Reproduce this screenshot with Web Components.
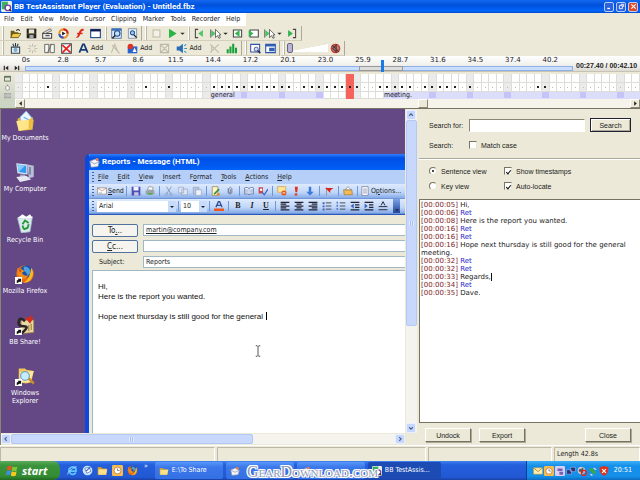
<!DOCTYPE html>
<html lang="en">
<head>
<meta charset="utf-8">
<title>BB TestAssistant Player</title>
<style>
html,body{margin:0;height:100%}
body{background:#ece9d8;font:7px/9px "DejaVu Sans Condensed","Noto Sans",sans-serif;color:#222}
</style>
</head>
<body>
<bb-player></bb-player>
<script>
const BASE = `*{box-sizing:border-box}button,input,select{font:inherit;color:inherit;margin:0;padding:0}button{border:0;background:none}a{color:inherit;text-decoration:none}`;
function define(name, css, html) {
  const t = document.createElement('template');
  customElements.define(name, class extends HTMLElement {
    connectedCallback() {
      if (this.shadowRoot) return;
      t.innerHTML = `<style>${BASE}${css}</style>${typeof html === 'function' ? html(this) : html}`;
      this.attachShadow({mode: 'open'}).append(t.content.cloneNode(true));
    }
  });
}

/* Drawings on a 16 x 16 field */
const FOLDER = '<path d="M1 3h5l2 2h6v9H1z" fill="#c99a2e"/><path d="M2 6h13l-2 8H2z" fill="#fbe08a"/>';
const align = (a) => a.map((r, i) => `<path d="M${r[0]} ${2 + i * 3}h${r[1]}" stroke="#223" stroke-width="2"/>`).join('');
const WIN = '<rect x="1" y="2" width="14" height="12" fill="#fff" stroke="#123a8c" stroke-width="1.5"/>';
const ICONS = {
  app: '<rect width="16" height="16" rx="2" fill="#e8f3e8"/><rect x="1" y="1" width="9" height="11" fill="#3fae62"/><circle cx="10" cy="10" r="4" fill="#fff" stroke="#7a3fa8" stroke-width="2"/><path d="M12 12l3 3" stroke="#333" stroke-width="2"/>',
  open: '<path d="M1 4h5l1 2h5v8H1z" fill="#6b5a10"/><path d="M4 8h12l-4 6H1z" fill="#f0c84a" stroke="#54470c"/><path d="M9 4c2-3 4-2 5 0" stroke="#222" fill="none" stroke-width="1.5"/>',
  save: '<path d="M1 1h14v14H1z" fill="#222"/><path d="M4 2h8v6H4z" fill="#e9e7d2"/><path d="M5 10h6v5H5z" fill="#aaa"/><path d="M2 8h12v1H2z" fill="#77783a"/>',
  clap: '<path d="M1 8h13v7H1z" fill="#eee" stroke="#444" stroke-width="1.5"/><path d="M1 7L12 1l2 3L5 8z" fill="#ddd" stroke="#444"/><path d="M5 11h6" stroke="#555" stroke-width="2"/>',
  wheel: '<circle cx="8" cy="8" r="6" fill="#fff" stroke="#e4912a" stroke-width="3"/><path d="M8 2a6 6 0 0 1 6 6" stroke="#c22" stroke-width="3" fill="none"/><path d="M2 9a6 6 0 0 0 6 5" stroke="#3456c8" stroke-width="3" fill="none"/><path d="M6 5l5 3-5 3z" fill="#222"/>',
  flash: '<path d="M14 1C9 1 8 4 7 7H5L4 9h2c-1 3-2 4-4 5 4 1 6-1 7-5h3l1-2h-3c1-2 1-3 4-3z" fill="#e0281e"/>',
  win: WIN + '<path d="M1 2h14v3H1z" fill="#101a4c"/>',
  zoomwin: '<path d="M1 1h14v14H1z" fill="#dfeaff" stroke="#234f93"/><path d="M1 1h14v3H1z" fill="#3971bd"/><circle cx="9" cy="8" r="4" fill="#bfe1ff" stroke="#1e4778" stroke-width="1.5"/><path d="M6 11l-4 4" stroke="#222" stroke-width="2"/>',
  zoomdoc: '<path d="M2 1h12v14H2z" fill="#e8efff" stroke="#678"/><circle cx="8" cy="7" r="3" fill="#9ac9f4" stroke="#255a92" stroke-width="1.5"/><path d="M10 10l4 4" stroke="#222" stroke-width="2"/>',
  stop: '<path d="M3 3h10v10H3z" fill="#f4f2e6" stroke="#bdb9a6" stroke-width="1.5"/>',
  play: '<path d="M3 1l11 7-11 7z" fill="#27b441"/>',
  down: '<path d="M3 6h10l-5 5z" fill="#222"/>',
  first: '<path d="M2 1v14M2 2h4M2 14h4" stroke="#444" stroke-width="1.5" fill="none"/><path d="M13 3v10L6 8z" fill="#53c86b"/>',
  last: '<path d="M14 1v14M14 2h-4M14 14h-4" stroke="#444" stroke-width="1.5" fill="none"/><path d="M3 3v10l7-5z" fill="#35b551"/>',
  pickl: '<path d="M2 3v10l6-5z" fill="#4ac164"/><path d="M8 2v12l3-3 2 4 2-1-2-4h3z" fill="#fff" stroke="#333"/><path d="M1 2v12" stroke="#333"/>',
  framel: '<path d="M2 3h12v10H2z" fill="#fff" stroke="#444" stroke-width="1.5"/><path d="M11 3v10L4 8z" fill="#35b551"/>',
  framer: '<path d="M3 3h12v10H3z" fill="#fff" stroke="#444" stroke-width="1.5"/><path d="M1 3v10l7-5z" fill="#35b551"/>',
  cam: '<path d="M2 6h12v9H2z" fill="#eee" stroke="#345" stroke-width="1.5"/><circle cx="8" cy="10" r="3" fill="#7aaed4"/><path d="M4 1l2 4M12 1l-2 4M8 0v5" stroke="#234" stroke-width="1.5"/>',
  spark: '<path d="M8 1v4M8 11v4M1 8h4M11 8h4M3 3l3 3M13 3l-3 3M3 13l3-3M13 13l-3-3" stroke="#c2beaa" stroke-width="1.5"/>',
  split: '<path d="M1 2h6v12H1zM9 2h6v12H9z" fill="#f6f6f0" stroke="#555" stroke-width="1.2"/><path d="M11 2L5 14" stroke="#555"/>',
  cut: '<path d="M1 1h14v14H1z" fill="#fff" stroke="#345" stroke-width="1.5"/><path d="M2 3l12 11M14 2L2 14" stroke="#e3251b" stroke-width="2.5"/>',
  text: '<path d="M2 14L7 2h2l5 12M4 10h8" stroke="#183a78" stroke-width="2.5" fill="none"/>',
  textoff: '<path d="M2 14L7 2l5 12M3 3l11 12" stroke="#bdb9a6" stroke-width="1.5" fill="none"/>',
  shape: '<path d="M1 5h14v10H1z" fill="#2a63cf"/><circle cx="5" cy="5" r="4" fill="#e03123"/><path d="M8 13l3-6 3 6z" fill="#fff"/>',
  shapeoff: '<path d="M2 2h12v12H2zM2 2l12 12M14 2L2 14" stroke="#bdb9a6" fill="none" stroke-width="1.5"/>',
  sound: '<path d="M1 5h4l5-4v14l-5-4H1z" fill="#2b6cb8"/><path d="M12 4l3-2M12 8h4M12 12l3 2" stroke="#2b9ac0" stroke-width="1.5"/>',
  soundoff: '<path d="M2 2l12 12M14 2L2 14M4 5v6" stroke="#bdb9a6" stroke-width="1.5"/>',
  chart: '<path d="M1 15V9h3v6zM5 15V5h3v10zM9 15V1h3v14zM13 15V7h3v8z" fill="#17a03a"/>',
  sel: '<path d="M1 2h13v11H1z" fill="#fff" stroke="#2a55a8" stroke-width="1.5"/><circle cx="9" cy="9" r="3" fill="#cfe1ff" stroke="#225"/><path d="M11 11l4 4" stroke="#225" stroke-width="2"/>',
  pip: '<path d="M1 2h14v12H1z" fill="#fff" stroke="#2a55a8" stroke-width="1.5"/><path d="M1 2h14v3H1zM6 7h8v5H6z" fill="#3160b5"/>',
  mute: '<circle cx="8" cy="8" r="6" fill="#b08480" stroke="#cf3a2c" stroke-width="2"/><path d="M3 3l10 10M9 3v10l-5-5z" stroke="#5a3030" stroke-width="1.5" fill="none"/>',
  prev: '<path d="M2 2h3v12H2zM14 2v12L6 8z" fill="#222"/>',
  next: '<path d="M11 2h3v12h-3zM2 2v12l8-6z" fill="#222"/>',
  screen: '<path d="M1 3h14v11H1z" fill="none" stroke="#566b5c" stroke-width="2"/><path d="M1 3h14v3H1z" fill="#566b5c"/>',
  mouse: '<path d="M4 6q4-4 8 0v6q-4 5-8 0zM8 1v3" fill="#fff" stroke="#777" stroke-width="1.5"/>',
  keys: '<path d="M0 4h16v9H0z" fill="#ddd" stroke="#555"/><path d="M2 7h12M2 10h12" stroke="#555" stroke-dasharray="2 1"/>',
  left: '<path d="M11 3v10L5 8z" fill="#222"/>', right: '<path d="M5 3v10l6-5z" fill="#222"/>',
  cleft: '<path d="M10 3L5 8l5 5" fill="none" stroke="#4d6185" stroke-width="3"/>',
  cright: '<path d="M6 3l5 5-5 5" fill="none" stroke="#4d6185" stroke-width="3"/>',
  cup: '<path d="M3 10l5-5 5 5" fill="none" stroke="#4d6185" stroke-width="3"/>',
  cdown: '<path d="M3 6l5 5 5-5" fill="none" stroke="#4d6185" stroke-width="3"/>',
  docs: '<path d="M2 6l5-1 8 2-1 8-11 1z" fill="#e6b93a"/><path d="M4 5l5-5 5 6-3 6-6-3z" fill="#e9f6ff" stroke="#7fb4dc" stroke-width=".6"/><path d="M7 5l4 2" stroke="#6ba9da"/><path d="M1 8l10-1 3-2-1 9-10 2z" fill="#ffe58a"/><path d="M11 7l3-2-1 9-2 1z" fill="#eebc3e"/>',
  pc: '<path d="M10 2l5 1v9l-4 1z" fill="#b8bfd4"/><path d="M12 4v6" stroke="#5e6a90"/><path d="M1 1l9 1v8L2 9z" fill="#dfe6f4"/><path d="M2 2l7 1v6L3 8z" fill="#2f9af3"/><path d="M2 2l6 1-5 5z" fill="#86cbff"/><path d="M4 10h4v3H4z" fill="#a3abc4"/><path d="M1 12l8-1 4 3-9 2z" fill="#e5e8f2"/>',
  bin: '<path d="M2 4l12-1-2 12-7 1z" fill="#dbe9ef" stroke="#9fb4c2" stroke-width=".6"/><path d="M2 4l4-3 3 2 3-2 2 3z" fill="#fff"/><path d="M6 9l2-3 3 2M11 9l-1 3-3 1M7 13l-1-3" stroke="#249a38" stroke-width="1.5" fill="none"/>',
  fox: '<circle cx="8" cy="8" r="7" fill="#e86b13"/><circle cx="9" cy="6" r="5" fill="#1e4fa5"/><path d="M7 2q4 0 5 3t-2 4q-1-3-3-4z" fill="#4aa3e0"/><path d="M2 3q1 1 3 1l3 2q-3 0-2 2 2 2 5 1-2 3-5 3-4-1-4-5z" fill="#f08a1c"/><path d="M3 4l2 1-1 2z" fill="#c9400c"/><path d="M13 3q3 4 0 9-2 3-6 3 5-3 6-12z" fill="#f9b724"/>',
  share: '<path d="M5 4h10v10l-11 1z" fill="#ead9a5" stroke="#947a3a" stroke-width=".6"/><path d="M8 2h3l2-2v2h2l-3 5z" fill="#d82a18"/><path d="M8 5Q4 1 3 5t4 4-1 5-4-2" stroke="#2a2424" stroke-width="2" fill="none"/><path d="M11 8v5M13 7v5" stroke="#a88a3e"/>',
  explorer: '<path d="M3 2h5l1 1 6 1-2 9-4 1-6-1z" fill="#f3c75a"/><path d="M4 5l11-1-3 9H3z" fill="#ffe99a"/><circle cx="8" cy="8" r="3.5" fill="#c6ecff" stroke="#75a4c4"/><path d="M11 10l4 4" stroke="#c88d2f" stroke-width="2"/>',
  msg: '<path d="M1 6l8-3 6 4-2 7-10 1z" fill="#f4f4f8" stroke="#7c8aa8"/><path d="M1 6l7 4 7-3" stroke="#7c8aa8" fill="none"/><path d="M10 1l4 1v4l-4-1z" fill="#dd7f58"/>',
  env: '<path d="M1 3h14v10H1z" fill="#fff" stroke="#8a7b6a"/><path d="M1 3l7 5 7-5" stroke="#c46a50" fill="none"/><path d="M3 11h5" stroke="#6b84c8"/>',
  mail: '<path d="M1 3h14v10H1z" fill="#fff0b0" stroke="#d8a23a"/><path d="M1 3l7 6 7-6" stroke="#c8862b" stroke-width="1.5" fill="none"/>',
  save2: '<path d="M1 1h14v14H1z" fill="#4b52b4"/><path d="M4 1h8v6H4z" fill="#f3f4ff"/><path d="M5 10h7v5H5z" fill="#c4c8e8"/>',
  print: '<path d="M4 6l2-5 7 1-1 5z" fill="#fff" stroke="#777"/><path d="M1 7l12-1 2 2v5l-12 1-2-2z" fill="#9aa3a8"/><path d="M5 11h7v3H5z" fill="#4fae4a"/>',
  scis: '<path d="M4 1l6 10M12 1L5 11" stroke="#8797b5" stroke-width="1.5"/><circle cx="4" cy="13" r="2" fill="none" stroke="#8797b5"/><circle cx="11" cy="13" r="2" fill="none" stroke="#8797b5"/>',
  copy: '<path d="M1 2h8v9H1zM6 5h9v9H6z" fill="#dfe6f6" stroke="#8f9fbe"/>',
  paste: '<path d="M2 2h9v11H2z" fill="#b8c4dc" stroke="#8f9fbe"/><path d="M6 6h9v9H6z" fill="#eef2fb" stroke="#8f9fbe"/>',
  sign: '<path d="M2 1h9v14H2z" fill="#fff5c8" stroke="#8a7340"/><path d="M5 13l8-8" stroke="#3d8d3e" stroke-width="2.5"/><path d="M9 12l5-1v4H9z" fill="#d88e39"/>',
  clip: '<path d="M5 4v7q3 4 6 0V4q-2-4-5 0v7h3V5" stroke="#6a7590" stroke-width="1.3" fill="none"/>',
  book: '<path d="M8 4Q5 1 1 3v10q4-2 7 1 3-3 7-1V3q-4-2-7 1z" fill="#fff" stroke="#334f8d"/><path d="M8 4v10M3 5v6M5 5v6M11 5v6M13 5v6" stroke="#5f7bb5"/>',
  names: '<path d="M1 2h7v10H1z" fill="#c9484c"/><circle cx="5" cy="6" r="2" fill="#fff"/><path d="M7 10l3 4 6-9" stroke="#3a62bf" stroke-width="2" fill="none"/>',
  perm: '<path d="M1 1h13v9H1z" fill="#ffe79a" stroke="#c8952b"/><circle cx="11" cy="11" r="4" fill="#e4581f"/><path d="M9 11h4" stroke="#fff" stroke-width="1.5"/>',
  bang: '<path d="M6 1h5l-1 9H7zM6 12h4v3H6z" fill="#e2321d"/>',
  low: '<path d="M6 1h4v8h4l-6 6-6-6h4z" fill="#3b7be0"/>',
  flag: '<path d="M4 2v13" stroke="#777"/><path d="M2 3h13l-5 4v4z" fill="#d9231c"/>',
  brief: '<path d="M1 6h13l1 8H2z" fill="#f3ba58" stroke="#9b6d20"/><path d="M4 6l4-5 5 5z" fill="#fff" stroke="#777"/>',
  opts: '<path d="M3 1h10v14H3z" fill="#fff" stroke="#58688d"/><path d="M5 5h6M5 8h6M5 11h6" stroke="#58688d"/>',
  font: '<path d="M3 10L7 1h2l4 9M5 7h6" stroke="#2a4a98" stroke-width="2" fill="none"/><path d="M0 12h16v4H0z" fill="#f0571c"/>',
  al: align([[1,14],[1,9],[1,14],[1,9],[1,14]]), ac: align([[1,14],[4,8],[1,14],[4,8],[1,14]]), ar: align([[1,14],[6,9],[1,14],[6,9],[1,14]]),
  bul: '<path d="M6 3h9M6 8h9M6 13h9" stroke="#445" stroke-width="1.5"/><path d="M1 2h3v3H1zM1 7h3v3H1zM1 12h3v3H1z" fill="#3d63be"/>',
  num: '<path d="M6 3h9M6 8h9M6 13h9" stroke="#445" stroke-width="1.5"/><path d="M2 1v14" stroke="#3d63be" stroke-width="2" stroke-dasharray="3 2"/>',
  out: '<path d="M1 2h14M8 6h7M8 10h7M1 14h14" stroke="#223" stroke-width="2"/><path d="M6 4v8L1 8z" fill="#3d63be"/>',
  ind: '<path d="M1 2h14M8 6h7M8 10h7M1 14h14" stroke="#223" stroke-width="2"/><path d="M1 4v8l5-4z" fill="#3d63be"/>',
  rule: '<path d="M1 9h14M1 14h14" stroke="#223" stroke-width="1.5"/><path d="M5 7l3-6 3 6" stroke="#223" fill="none" stroke-width="1.5"/>',
  flagxp: '<path d="M2 3q3-2 5 0L6 8Q4 6 1 8z" fill="#ee5023"/><path d="M8 3q3 2 6 0l-1 5q-3 2-6 0z" fill="#7fc934"/><path d="M1 9q3-2 5 0l-1 5q-2-2-5 0z" fill="#3f8ff0"/><path d="M7 9q3 2 6 0l-1 5q-3 2-6 0z" fill="#fbc820"/>',
  ie: '<path d="M13 11q-3 4-7 2T3 6q3-4 7-3t3 6H4" stroke="#5cc4ff" stroke-width="2.5" fill="none"/><path d="M1 14Q0 9 14 2" stroke="#c8edff" stroke-width="1" fill="none"/>',
  desk: '<circle cx="8" cy="8" r="7" fill="#cfe5fb"/><path d="M4 5l6-2 3 6-6 3z" fill="#fff" stroke="#376ab8"/><path d="M6 9l6-6" stroke="#1d5bbc" stroke-width="1.5"/>',
  folder: FOLDER,
  clock: '<rect width="16" height="16" rx="2" fill="#f5bd50"/><circle cx="8" cy="8" r="5" fill="#fff" stroke="#b5651d"/><path d="M8 5v3h3" stroke="#555" fill="none"/>',
  lav: '<rect width="16" height="16" rx="2" fill="#dccff5"/><path d="M4 4h8v4H4zM7 9h6v5H7z" fill="#7560b5"/>',
  net: '<path d="M1 6h8v7H1zM7 2h8v7H7z" fill="#24326e" stroke="#9ab4ff"/>',
  vol: '<circle cx="7" cy="7" r="6" fill="#c9c5cf"/><path d="M3 5h3l4-3v10L6 9H3z" fill="#555"/><circle cx="11" cy="11" r="4" fill="none" stroke="#e3251b" stroke-width="2"/>',
  usb: '<path d="M2 3l5 1 6 6-3 4-7-7z" fill="#38a845"/><path d="M9 3l4 3M4 13l3 2" stroke="#ddd" stroke-width="2"/>',
  shield: '<path d="M8 0l7 2q1 10-7 14Q0 12 1 2z" fill="#e2301c"/><path d="M5 5l6 6M11 5l-6 6" stroke="#fff" stroke-width="2"/>',
  min: '<path d="M3 11h6v3H3z" fill="#fff"/>',
  restore: '<path d="M6 3h7v6M3 6h7v7H3z" fill="none" stroke="#fff" stroke-width="2"/>',
  close: '<path d="M3 3l10 10M13 3L3 13" stroke="#fff" stroke-width="2.5"/>',
  ibeam: '<path d="M5 1h2l1 1 1-1h2M8 2v12M5 15h2l1-1 1 1h2" stroke="#222" fill="none"/>'
};
define('x-icon', `:host{display:inline-block;width:11px;height:11px;flex:none}svg{display:block;width:100%;height:100%}`,
  el => `<svg viewBox="0 0 16 16" aria-hidden="true">${ICONS[el.getAttribute('name')] || ''}</svg>`);

define('tool-button', `:host{display:flex;flex:none}button{display:flex;align-items:center;justify-content:center;gap:2px;min-width:var(--tool,16px);height:13px;white-space:nowrap}:host([narrow]){margin-left:-2px}:host([narrow]) button{min-width:8px}:host([wide]) button{padding:0 4px 0 3px}`,
  el => `<button aria-label="${el.getAttribute('icon')}"><x-icon name="${el.getAttribute('icon')}" style="${el.hasAttribute('narrow') ? 'width:7px;height:7px' : ''}"></x-icon><slot></slot></button>`);

define('tool-strip', `:host{display:flex;align-items:center;height:15px;padding:0 1px 0 5px;border-right:1px solid #aca899;border-bottom:1px solid #d3cfbc;box-shadow:inset 2px 0 #ece9d8,inset 3px 0 #fff,inset 4px 0 #b9b5a2}`, `<slot></slot>`);

define('title-bar', `:host{display:flex;align-items:center;gap:2px;height:13px;padding:0 2px 0 1px;background:linear-gradient(#1468ee,#0050dc 40%,#0066fc 85%,#0048c8);color:#fff;font:bold 8px/12px Roboto,"Noto Sans",sans-serif}span{flex:1;white-space:nowrap}
button{width:10px;height:10px;border:1px solid #b8cdf8;border-radius:2px;background:#2a62e0;display:flex;align-items:center;justify-content:center}.c{background:#e0492a}x-icon{width:7px;height:7px}x-icon.a{width:11px;height:11px}`,
  `<x-icon class="a" name="app"></x-icon><span>BB TestAssistant Player (Evaluation) - Untitled.fbz</span><button aria-label="Minimize"><x-icon name="min"></x-icon></button><button aria-label="Restore"><x-icon name="restore"></x-icon></button><button class="c" aria-label="Close"><x-icon name="close"></x-icon></button>`);

define('menu-bar', `:host{display:block}nav{display:flex;height:13px;align-items:center;width:max-content;gap:6px;padding:0 6px 0 4px;background:#fff}button{line-height:11px}`,
  `<nav>${['File','Edit','View','Movie','Cursor','Clipping','Marker','Tools','Recorder','Help'].map(m => `<button>${m}</button>`).join('')}</nav>`);

const tb = (...a) => a.map(n => n === 'down' ? '<tool-button narrow icon="down"></tool-button>' : `<tool-button icon="${n}"></tool-button>`).join('');
define('tool-bars', `:host{display:block}div{display:flex;gap:1px}.r2{--tool:17px}.tight{--tool:15px}input{appearance:none;width:42px;height:12px;margin:0;background:linear-gradient(to bottom right,transparent 50%,#fff 51%) center/100% 8px no-repeat}
input::-webkit-slider-thumb{appearance:none;width:6px;height:10px;border:1px solid #667;border-radius:2px;background:#b9b4d8}.a{padding-left:7px}`,
  `<div><tool-strip class="a">${tb('open','save','clap','wheel','flash','win')}<tool-strip style="height:13px;border:0;padding:0 0 0 5px">${tb('zoomwin','zoomdoc')}</tool-strip></tool-strip><tool-strip>${tb('stop','play','down')}<tool-strip style="height:13px;border:0">${tb('first','pickl','down','framel','framer','pickl','down','last')}</tool-strip></tool-strip></div>
<div class="r2"><tool-strip class="a">${tb('cam','spark','split','cut')}<tool-button wide icon="text">Add</tool-button>${tb('textoff')}<tool-button wide icon="shape">Add</tool-button>${tb('shapeoff')}<tool-button wide icon="sound">Add</tool-button>${tb('soundoff','chart')}</tool-strip><tool-strip class="tight">${tb('sel','pip')}</tool-strip><tool-strip class="tight"><input type="range" value="5" aria-label="Volume">${tb('mute')}</tool-strip></div>`);

define('time-ruler', `:host{display:grid;grid-template-columns:minmax(0,1fr) 67px;height:16px;background:linear-gradient(#fff,#f1f0ec 60%,#dcdad2);border-bottom:1px solid #c6c2b4;font:7px/8px "DejaVu Sans",sans-serif}
.l{display:grid;grid-template-columns:repeat(15,1fr);padding-left:7px;padding-right:4px;text-align:center;line-height:9px}.b{display:flex;align-items:center}.b button{width:11px;height:6px;display:flex;justify-content:center}.b button x-icon{width:6px;height:6px}
.track{flex:1;margin-left:3px;height:5px;background:#c9defc;border:1px solid #8fb0ea;position:relative}.track i{position:absolute;left:61%;width:8%;top:-1px;bottom:-1px;border:1px solid #999;background:#ddd}.track b{position:absolute;left:65%;width:3px;top:-7px;height:12px;background:#1a7be8}
strong{font:bold 7px/8px "Liberation Sans",Arial,sans-serif;align-self:end;padding:0 0 1px 3px;white-space:nowrap}`,
  `<div><div class="l">${['0s','2.8','5.7','8.6','11.5','14.4','17.2','20.1','23.0','25.9','28.7','31.6','34.5','37.4','40.2'].map(x => `<span>${x}</span>`).join('')}</div><div class="b"><button aria-label="Start"><x-icon name="prev"></x-icon></button><button aria-label="End"><x-icon name="next"></x-icon></button><div class="track"><i></i><b></b></div></div></div><strong>00:27.40 / 00:42.10</strong>`);

const DARK = new Set([4,17,20,26,27,28,29,30,31,32,33,34,35,36,38,39,40,41,42,43,44,45,48,49,50,51,52,54,55,56,57,58,60,69,70]);
define('key-grid', `:host{display:grid;grid-template-columns:15px minmax(0,1fr);margin-top:2px}.k{display:grid;grid-template-rows:9px 9px 7px;justify-items:center;align-items:center;background:linear-gradient(#ece9d8,#ccd4c4)}.k x-icon{width:7px;height:7px}
.g{display:grid;grid-template-columns:repeat(83,1fr);grid-template-rows:9px 9px 7px;background:#fff}.g i{border-right:1px solid #deded8;border-bottom:1px solid #deded8;display:flex;align-items:center;justify-content:center}.g i.s{background:#ebebeb}.g i.v{background:#dcdcfb;border-color:#dcdcfb}.g i.v.s{background:#c5c3f7}.g i.r{background:#f4645c;border-color:#f4645c}.g i b{width:1px;height:1px;background:#bbb}.g i b.d{background:#222;width:2px;height:2px}
span{grid-row:3;font:7px/7px "DejaVu Sans Condensed",sans-serif;white-space:nowrap;width:0;overflow:visible}`,
  () => { let h = '';
    for (let r = 1; r < 4; r++) for (let c = 0; c < 83; c++) {
      const cl = [c % 5 ? '' : 's', r === 3 && ((c > 25 && c < 41) || c > 48) ? 'v' : '', c === 44 ? 'r' : ''].join(' ');
      h += `<i class="${cl}" style="grid-area:${r}/${c + 1}">${r === 2 ? `<b class="${DARK.has(c) ? 'd' : ''}"></b>` : ''}</i>`;
    }
    return `<div class="k"><x-icon name="screen"></x-icon><x-icon name="mouse"></x-icon><x-icon name="keys"></x-icon></div><div class="g">${h}<span style="grid-column:27">general</span><span style="grid-column:50">meeting.</span></div>`; });

define('classic-scroll', `:host{display:flex;height:9px;padding-left:15px;background:linear-gradient(90deg,#ccd4c4 15px,#f6f4ea 15px)}button{width:10px;border:1px solid;border-color:#fff #8a8776 #8a8776 #fff;background:#ece9d8;display:flex;align-items:center;justify-content:center}x-icon{width:7px;height:7px}.t{flex:1;display:flex}.t b{margin-left:65%;width:10px;border:1px solid;border-color:#fff #8a8776 #8a8776 #fff;background:#ece9d8}`,
  `<button aria-label="Scroll left"><x-icon name="left"></x-icon></button><div class="t"><b></b></div><button aria-label="Scroll right"><x-icon name="right"></x-icon></button>`);

define('xp-scroll', `:host{display:flex;background:#f4f3ee;height:10px}:host([vertical]){flex-direction:column;height:auto;width:11px}button{flex:none;width:10px;height:10px;background:#c6d6fc;border:1px solid #e8efff;border-radius:2px;display:flex;align-items:center;justify-content:center}x-icon{width:6px;height:6px}
.t{flex:1;display:flex}:host([vertical]) .t{flex-direction:column}.t b{flex:0 0 63%;background:#c8d7fc;border:1px solid #b4c8f6;border-radius:2px;display:grid;place-items:center}:host([vertical]) .t b{flex-basis:68%}.t b::after{content:"";width:5px;height:5px;background:repeating-linear-gradient(90deg,#dfe9ff 0 1px,#a9c0f2 1px 2px)}`,
  el => { const v = el.hasAttribute('vertical'); return `<button aria-label="Back"><x-icon name="${v ? 'cup' : 'cleft'}"></x-icon></button><div class="t"><b></b></div><button aria-label="Forward"><x-icon name="${v ? 'cdown' : 'cright'}"></x-icon></button>`; });

define('desktop-icon', `:host{display:flex;flex-direction:column;align-items:center;min-height:51px;text-align:center;color:#fff;line-height:8px;width:48px}.i{position:relative;width:20px;height:20px;margin-bottom:3px}.i x-icon{width:20px;height:20px}.i svg{position:absolute;left:0;bottom:0;width:7px;height:7px}span{max-width:48px}`,
  el => `<div class="i"><x-icon name="${el.getAttribute('icon')}"></x-icon>${el.hasAttribute('link') ? '<svg viewBox="0 0 8 8"><path d="M0 0h8v8H0z" fill="#fff"/><path d="M2 7V4l2-1-1-1h4v4L6 5 4 6z" fill="#111"/></svg>' : ''}</div><span><slot></slot></span>`);

const ic = n => `<button aria-label="${n}"><x-icon name="${n}"></x-icon></button>`;
define('mail-window', `:host{display:flex;flex-direction:column;border-left:4px solid #0a48e0;border-top-left-radius:5px;background:#ece9d8;overflow:hidden}
header{flex:none;display:flex;align-items:center;gap:2px;height:16px;margin-left:-4px;padding-left:4px;background:linear-gradient(#2f80ff,#0050e4 25%,#0058f0 70%,#0062f8);color:#fff;font:bold 8px/12px Roboto,"Noto Sans",sans-serif;border-top-left-radius:5px}
.m,.t{flex:none;display:flex;align-items:center;padding-left:3px;background:#b5cff8}.m::before,.t::before{content:"";width:2px;height:10px;margin-right:3px;background:repeating-linear-gradient(#3f62a8 0 1px,transparent 1px 3px)}
.m{height:14px;gap:0}.m button{margin-right:9px}.m::before{margin-right:4px}
.t{height:15px;background:linear-gradient(#deeafd,#c0d6f8 60%,#86abe8);border-bottom:1px solid #6f97d8;white-space:nowrap}
.t button{display:flex;align-items:center;justify-content:center;width:14px;flex:none}.t x-icon{width:10px;height:10px}.t hr{flex:none;width:1px;height:10px;border:0;margin:0 2px;background:#6f97d8}.t .w{width:auto;gap:1px}
.t select{appearance:none;height:11px;border:0;background:#fff;padding:0 2px;flex:none}.c{position:relative;display:flex;align-items:center}.c::after{content:"";width:8px;height:11px;margin-left:-8px;background:#c6dcfa;pointer-events:none}.c::before{content:"";position:absolute;right:2px;top:5px;border:2px solid transparent;border-top-color:#222;z-index:1;pointer-events:none}
.t .more{width:7px;height:14px;background:linear-gradient(#7ba2e6,#23459c);margin-left:3px;align-items:end}.t .more x-icon{width:6px;height:6px}
.f{flex:none;display:grid;grid-template-columns:46px minmax(0,1fr);column-gap:5px;row-gap:3px;padding:9px 0 2px 3px;border-top:1px solid #2c59c0}.f button{height:13px;border:1px solid #51719f;border-radius:2px;background:#f5f4ee;font-size:8px}.f input{height:12px;border:1px solid #9fb8c4;border-right:0;background:#fff;padding:0 2px;min-width:0;width:100%}.f label{padding-left:7px;line-height:12px}
.body{flex:1;min-height:0;margin-left:3px;background:#fff;border:1px solid #9fb8c4;border-width:1px 0 0 1px;padding:11px 5px;font:8px/10px "Liberation Sans",Arial,sans-serif;color:#111}.body p{margin:0;min-height:10px;white-space:nowrap}.body p:last-child::after{content:"";display:inline-block;height:8px;border-left:1px solid #000;margin-left:3px;vertical-align:-1px}
.bi{font:bold 8px/10px "Liberation Serif",serif}`,
  `<header><x-icon name="msg"></x-icon>Reports - Message (HTML)</header>
<div class="m">${['File','Edit','View','Insert','Format','Tools','Actions','Help'].map(m => m === 'Format' ? '<button>F<u>o</u>rmat</button>' : `<button><u>${m[0]}</u>${m.slice(1)}</button>`).join('')}</div>
<div class="t"><button class="w"><x-icon name="env"></x-icon><span><u>S</u>end</span></button><hr>${ic('save2')}${ic('print')}<hr>${ic('scis')}${ic('copy')}${ic('paste')}<hr>${ic('sign')}${ic('clip')}<hr>${ic('book')}${ic('names')}<hr>${ic('perm')}${ic('bang')}${ic('low')}<hr>${ic('flag')}<hr>${ic('brief')}<hr><button class="w"><x-icon name="opts"></x-icon><span>O<u>p</u>tions...</span></button></div>
<div class="t"><span class="c"><select aria-label="Font" style="width:79px"><option>Arial</option></select></span><hr><span class="c"><select aria-label="Size" style="width:26px"><option>10</option></select></span><hr>${ic('font')}<hr><button class="bi">B</button><button class="bi"><i>I</i></button><button class="bi"><u>U</u></button><hr>${['al','ac','ar','bul','num','out','ind','rule'].map(ic).join('')}<button class="more" aria-label="More"><x-icon name="down"></x-icon></button></div>
<div class="f"><button>To<u>.</u>..</button><input aria-label="To" value="martin@company.com" style="text-decoration:underline"><button><u>C</u>c...</button><input aria-label="Cc"><label for="s">Subject:</label><input id="s" value="Reports"></div>
<div class="body"><p>Hi,</p><p>Here is the report you wanted.</p><p></p><p>Hope next thursday is still good for the general</p></div>`);

define('capture-view', `:host{display:grid;grid-template:minmax(0,1fr) 12px/minmax(0,1fr) 12px;border-left:1px solid #8a8776;background:#ece9d8;min-height:0}
.d{position:relative;overflow:hidden;background:#644885}.icons{padding-top:2px;display:flex;flex-direction:column;width:48px}mail-window{position:absolute;left:84px;top:45px;right:0;bottom:0}.cur{position:absolute;left:251px;top:236px;width:12px;height:12px}xp-scroll{margin-top:1px}xp-scroll[vertical]{margin:1px 0 0 1px}`,
  `<div class="d"><div class="icons"><desktop-icon icon="docs">My Documents</desktop-icon><desktop-icon icon="pc">My Computer</desktop-icon><desktop-icon icon="bin">Recycle Bin</desktop-icon><desktop-icon icon="fox" link>Mozilla Firefox</desktop-icon><desktop-icon icon="share" link>BB Share!</desktop-icon><desktop-icon icon="explorer" link>Windows<br>Explorer</desktop-icon></div><mail-window></mail-window><x-icon class="cur" name="ibeam"></x-icon></div><xp-scroll vertical></xp-scroll><xp-scroll></xp-scroll>`);

const LOG = [['05','Hi,'],['06',0],['08','Here is the report you wanted.'],['16',0],['16',0],['16','Hope next thursday is still good for the general <span>meeting.</span>'],['32',0],['32',0],['33','<span class="cur">Regards,</span>'],['34',0],['35','Dave.']];
define('search-panel', `:host{display:flex;flex-direction:column;min-height:0;padding-left:2px;font-family:"Liberation Sans",Arial,sans-serif;font-size:7px}
form{display:grid;grid-template-columns:40px minmax(0,1fr) 41px;column-gap:0;row-gap:6px;padding:9px 9px 6px 10px;align-items:center}
.btn{height:14px;border:1px solid;border-color:#fff #777464 #777464 #fff;box-shadow:1px 1px #aca899;background:#ece9d8}form .btn{border:1px solid #223;box-shadow:inset 1px 1px #fff,inset -1px -1px #aca899}
.q{height:13px;border:1px solid;border-color:#8a8776 #fff #fff #8a8776;background:#fff;margin-right:5px;min-width:0;padding:0 2px}
label{display:flex;align-items:center;gap:4px;white-space:nowrap;height:14px}input[type=checkbox],input[type=radio]{appearance:none;width:8px;height:8px;background:#fff;border:1px solid;border-color:#777464 #e8e5d4 #e8e5d4 #777464;display:grid;place-items:center}input[type=radio]{border-radius:50%}input[type=radio]:checked::after{content:"";width:2px;height:2px;border-radius:50%;background:#111}input[type=checkbox]:checked::after{content:"";width:2px;height:4px;border:solid #111;border-width:0 1px 1px 0;transform:rotate(40deg)}
.o{display:grid;grid-template-columns:75px 1fr;padding:5px 10px 6px;border-top:1px solid #aca899;box-shadow:inset 0 1px #fff;row-gap:1px}
.log{flex:1;min-height:0;background:#fff;border:1px solid #777464;border-width:1px 0 1px 1px;padding:1px 1px;font:7px/8px "DejaVu Sans",sans-serif}.log p{margin:0}.log b{font-weight:400;color:#7e1c1c}.log em{font-style:normal;color:#2a2ac8}.log .cur{border-right:1px solid #111}
footer{display:flex;gap:8px;padding:5px 9px 3px 6px}footer .btn{width:46px}footer .btn:last-child{margin-left:auto}`,
  `<form onsubmit="return false"><label for="q">Search for:</label><input class="q" id="q"><button class="btn">Search</button><span>Search:</span><label><input type="checkbox">Match case</label></form>
<div class="o"><label><input type="radio" name="v" checked>Sentence view</label><label><input type="checkbox" checked>Show timestamps</label><label><input type="radio" name="v">Key view</label><label><input type="checkbox" checked>Auto-locate</label></div>
<div class="log">${LOG.map(([t, s]) => `<p><b>[00:00:${t}]</b> ${s || '<em>Ret</em>'}</p>`).join('')}</div>
<footer><button class="btn">Undock</button><button class="btn">Export</button><button class="btn">Close</button></footer>`);

define('status-bar', `:host{display:grid;grid-template-columns:215px minmax(0,1fr) 124px 86px;gap:2px;height:16px;padding-top:1px;border-top:1px solid #fff}span{border:1px solid;border-color:#bdb9a6 #fff #fff #bdb9a6;padding:2px 2px;line-height:9px}`, `<span></span><span></span><span></span><span>Length 42.8s</span>`);

define('task-bar', `:host{display:flex;align-items:stretch;height:19px;background:linear-gradient(#3f83f0,#245fdc 20%,#2258d4 85%,#1941a5);color:#fff;position:relative}
.s{width:60px;display:flex;align-items:center;gap:3px;padding-left:6px;background:linear-gradient(#5cab5c,#3a923a 25%,#348c34 80%,#226a22);border-radius:0 7px 7px 0;font:italic bold 11px/13px "Noto Sans",sans-serif}.s x-icon{width:13px;height:13px}
.q{display:flex;align-items:center;gap:4px;padding:0 7px 0 7px}.q button{display:flex}.q x-icon{width:11px;height:11px}.q span{align-self:flex-start;line-height:10px;padding-left:2px}
.b{flex:1;display:grid;grid-template-columns:repeat(3,68px) 73px;gap:3px;padding:1px 0;min-width:0}.b button{display:flex;align-items:center;gap:3px;padding-left:4px;border-radius:2px;background:linear-gradient(#5a97f8,#3c78ea 30%,#3370e4);overflow:hidden;white-space:nowrap}.b button.on{background:#1c4bb4}.b x-icon{width:10px;height:10px}
.y{display:flex;align-items:center;gap:1px;padding:0 8px 0 6px;border-left:1px solid #0c3c9c;background:linear-gradient(#3cb0f8,#1590ea 25%,#1490ea 80%,#0d6cc0)}.y x-icon{width:10px;height:10px}.y time{padding-left:4px}
.w{position:absolute;left:247px;bottom:1px;font:16px/14px "Liberation Serif",serif;font-variant:small-caps;color:#8f9ab8;text-shadow:1px 0 #fff,-1px 0 #fff,0 1px #fff,0 -1px #fff,1px 1px #fff,-1px -1px #fff,1px -1px #fff,-1px 1px #fff;white-space:nowrap}`,
  `<button class="s"><x-icon name="flagxp"></x-icon>start</button><div class="q">${['ie','desk','folder','clock','fox'].map(ic).join('')}<span>»</span></div>
<div class="b"><button><x-icon name="folder"></x-icon>E:\\To Share</button><button aria-label="Reports"><x-icon name="msg"></x-icon></button><button aria-label="Message"><x-icon name="msg"></x-icon></button><button class="on"><x-icon name="app"></x-icon>BB TestAssis...</button></div>
<div class="y">${['mail','clock','lav','net','vol','usb','shield'].map(n => `<x-icon name="${n}"></x-icon>`).join('')}<time>20:51</time></div><span class="w">GearDownload.com</span>`);

define('bb-player', `:host{display:flex;flex-direction:column;height:100vh;overflow:hidden}main{flex:1;min-height:0;display:grid;grid-template:minmax(0,1fr)/minmax(0,1fr) 223px;border-top:1px solid #777464}`,
  `<title-bar></title-bar><menu-bar></menu-bar><tool-bars></tool-bars><time-ruler></time-ruler><key-grid></key-grid><classic-scroll></classic-scroll><main><capture-view></capture-view><search-panel></search-panel></main><status-bar></status-bar><task-bar></task-bar>`);
</script>
</body>
</html>
